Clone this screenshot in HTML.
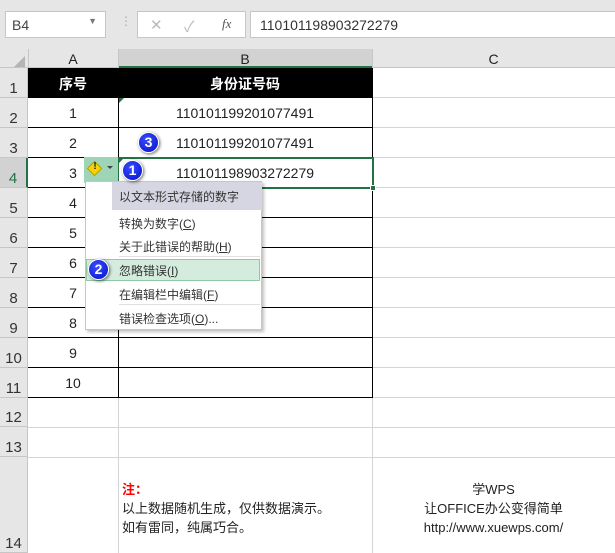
<!DOCTYPE html><html><head><meta charset="utf-8"><style>
*{margin:0;padding:0;box-sizing:border-box}
body{width:615px;height:553px;overflow:hidden;background:#fff;font-family:"Liberation Sans","Noto Sans CJK SC",sans-serif;position:relative;font-size:14px;color:#222}
.a{position:absolute}
.hl{position:absolute;background:#d4d4d4;height:1px}
.vl{position:absolute;background:#d4d4d4;width:1px}
.rh{position:absolute;left:0;width:28px;background:#e6e6e6;border-right:1px solid #c6c6c6;border-bottom:1px solid #c6c6c6;font-size:15px;display:flex;align-items:flex-end;justify-content:center;padding-bottom:0;color:#333}
.c{position:absolute;text-align:center;font-size:14px}
.badge{position:absolute;width:21px;height:21px;border-radius:50%;background:radial-gradient(circle at 40% 35%,#3a4cff,#0010c8);color:#fff;font-weight:bold;font-size:14px;text-align:center;line-height:18px;border:1.5px solid #fff;box-shadow:1px 1px 3px rgba(0,0,0,.6)}
.mi{position:absolute;left:119px;font-size:12px;color:#333}
</style></head><body>
<div class="a" style="left:0;top:0;width:615px;height:49px;background:#e6e6e6"></div>
<div class="a" style="left:5px;top:11px;width:101px;height:27px;background:#fff;border:1px solid #c6c6c6;font-size:14px;padding:5px 0 0 6px;color:#444">B4<span style="position:absolute;right:8px;top:4px;font-size:9px;color:#777">▼</span></div>
<div class="a" style="left:120px;top:14px;color:#aaa;font-size:12px">⋮</div>
<div class="a" style="left:137px;top:11px;width:109px;height:27px;background:#fff;border:1px solid #c6c6c6;color:#bbb;font-size:15px;padding-top:4px"><span style="position:absolute;left:12px">✕</span><span style="position:absolute;left:46px">✓</span><span style="position:absolute;left:84px;color:#555;font-style:italic;font-family:'Liberation Serif',serif;font-size:13px">fx</span></div>
<div class="a" style="left:250px;top:11px;width:370px;height:27px;background:#fff;border:1px solid #c6c6c6;padding:5px 0 0 9px;font-size:14px;color:#333">110101198903272279</div>
<div class="a" style="left:0;top:49px;width:615px;height:19px;background:#e6e6e6;border-bottom:1px solid #c6c6c6"></div>
<div class="a" style="left:14px;top:56px;width:0;height:0;border-left:11px solid transparent;border-bottom:11px solid #b4b4b4"></div>
<div class="a" style="left:118px;top:49px;width:254px;height:19px;background:#d2d2d2;border-bottom:2px solid #217346"></div>
<div class="vl" style="left:28px;top:49px;height:19px;background:#c6c6c6"></div>
<div class="vl" style="left:118px;top:49px;height:19px;background:#c6c6c6"></div>
<div class="vl" style="left:372px;top:49px;height:19px;background:#c6c6c6"></div>
<div class="c" style="left:28px;top:51px;width:90px;font-size:14px">A</div>
<div class="c" style="left:118px;top:51px;width:254px;font-size:14px">B</div>
<div class="c" style="left:372px;top:51px;width:243px;font-size:14px">C</div>
<div class="rh" style="top:68px;height:30px">1</div>
<div class="rh" style="top:98px;height:30px">2</div>
<div class="rh" style="top:128px;height:30px">3</div>
<div class="rh" style="top:158px;height:30px;background:#d2d2d2;color:#217346;border-right:2px solid #217346">4</div>
<div class="rh" style="top:188px;height:30px">5</div>
<div class="rh" style="top:218px;height:30px">6</div>
<div class="rh" style="top:248px;height:30px">7</div>
<div class="rh" style="top:278px;height:30px">8</div>
<div class="rh" style="top:308px;height:30px">9</div>
<div class="rh" style="top:338px;height:30px">10</div>
<div class="rh" style="top:368px;height:30px">11</div>
<div class="rh" style="top:398px;height:29px">12</div>
<div class="rh" style="top:427px;height:30px">13</div>
<div class="rh" style="top:457px;height:96px">14</div>
<div class="hl" style="left:372px;top:97px;width:243px"></div>
<div class="hl" style="left:372px;top:127px;width:243px"></div>
<div class="hl" style="left:372px;top:157px;width:243px"></div>
<div class="hl" style="left:372px;top:187px;width:243px"></div>
<div class="hl" style="left:372px;top:217px;width:243px"></div>
<div class="hl" style="left:372px;top:247px;width:243px"></div>
<div class="hl" style="left:372px;top:277px;width:243px"></div>
<div class="hl" style="left:372px;top:307px;width:243px"></div>
<div class="hl" style="left:372px;top:337px;width:243px"></div>
<div class="hl" style="left:372px;top:367px;width:243px"></div>
<div class="hl" style="left:28px;top:397px;width:587px"></div>
<div class="hl" style="left:28px;top:427px;width:587px"></div>
<div class="hl" style="left:28px;top:457px;width:587px"></div>
<div class="vl" style="left:118px;top:398px;height:155px"></div>
<div class="vl" style="left:372px;top:398px;height:155px"></div>
<div class="a" style="left:28px;top:68px;width:345px;height:30px;background:#000"></div>
<div class="c" style="left:28px;top:74px;width:90px;color:#fff;font-weight:bold;font-size:14px">序号</div>
<div class="c" style="left:118px;top:74px;width:254px;color:#fff;font-weight:bold;font-size:14px">身份证号码</div>
<div class="a" style="left:28px;top:98px;width:345px;height:300px;border:1px solid #000;border-top:0;border-left:0"></div>
<div class="a" style="left:118px;top:98px;width:1px;height:300px;background:#000"></div>
<div class="hl" style="left:28px;top:127px;width:345px;background:#000"></div>
<div class="hl" style="left:28px;top:157px;width:345px;background:#000"></div>
<div class="hl" style="left:28px;top:187px;width:345px;background:#000"></div>
<div class="hl" style="left:28px;top:217px;width:345px;background:#000"></div>
<div class="hl" style="left:28px;top:247px;width:345px;background:#000"></div>
<div class="hl" style="left:28px;top:277px;width:345px;background:#000"></div>
<div class="hl" style="left:28px;top:307px;width:345px;background:#000"></div>
<div class="hl" style="left:28px;top:337px;width:345px;background:#000"></div>
<div class="hl" style="left:28px;top:367px;width:345px;background:#000"></div>
<div class="c" style="left:28px;top:105px;width:90px">1</div>
<div class="c" style="left:28px;top:135px;width:90px">2</div>
<div class="c" style="left:28px;top:165px;width:90px">3</div>
<div class="c" style="left:28px;top:195px;width:90px">4</div>
<div class="c" style="left:28px;top:225px;width:90px">5</div>
<div class="c" style="left:28px;top:255px;width:90px">6</div>
<div class="c" style="left:28px;top:285px;width:90px">7</div>
<div class="c" style="left:28px;top:315px;width:90px">8</div>
<div class="c" style="left:28px;top:345px;width:90px">9</div>
<div class="c" style="left:28px;top:375px;width:90px">10</div>
<div class="c" style="left:118px;top:105px;width:254px">110101199201077491</div>
<div class="c" style="left:118px;top:135px;width:254px">110101199201077491</div>
<div class="c" style="left:118px;top:165px;width:254px">110101198903272279</div>
<div class="a" style="left:119px;top:98px;width:0;height:0;border-right:5px solid transparent;border-top:5px solid #217346"></div>
<div class="a" style="left:119px;top:158px;width:0;height:0;border-right:5px solid transparent;border-top:5px solid #217346"></div>
<div class="a" style="left:117px;top:157px;width:257px;height:32px;border:2px solid #217346"></div>
<div class="a" style="left:370px;top:185px;width:6px;height:6px;background:#217346;border:1px solid #fff"></div>
<div class="a" style="left:84px;top:157px;width:34px;height:26px;background:#9fd5b7"></div>
<div class="a" style="left:89px;top:163px;width:11px;height:11px;background:#f5d400;border:1px solid #b89a00;transform:rotate(45deg)"></div>
<div class="a" style="left:92px;top:161px;width:6px;font-size:10px;font-weight:bold;text-align:center">!</div>
<div class="a" style="left:107px;top:166px;width:0;height:0;border-left:3px solid transparent;border-right:3px solid transparent;border-top:3px solid #444"></div>
<div class="a" style="left:85px;top:181px;width:177px;height:149px;background:#fff;border:1px solid #c6c6c6;box-shadow:2px 2px 3px rgba(0,0,0,.25)"></div>
<div class="a" style="left:112px;top:182px;width:150px;height:28px;background:#d6d6e2"></div>
<div class="mi" style="top:188px">以文本形式存储的数字</div>
<div class="mi" style="top:215px">转换为数字(<u>C</u>)</div>
<div class="mi" style="top:238px">关于此错误的帮助(<u>H</u>)</div>
<div class="hl" style="left:119px;top:256px;width:141px;background:#e0e0e0"></div>
<div class="a" style="left:86px;top:259px;width:174px;height:22px;background:#d3ecdd;border:1px solid #8fcaa5"></div>
<div class="mi" style="top:262px">忽略错误(<u>I</u>)</div>
<div class="mi" style="top:286px">在编辑栏中编辑(<u>F</u>)</div>
<div class="hl" style="left:119px;top:304px;width:141px;background:#e0e0e0"></div>
<div class="mi" style="top:310px">错误检查选项(<u>O</u>)...</div>
<div class="badge" style="left:138px;top:132px">3</div>
<div class="badge" style="left:122px;top:160px">1</div>
<div class="badge" style="left:88px;top:259px">2</div>
<div class="a" style="left:122px;top:480px;font-size:13px;line-height:19px;color:#222"><span style="color:#f00;font-weight:bold">注：</span><br>以上数据随机生成，仅供数据演示。<br>如有雷同，纯属巧合。</div>
<div class="a" style="left:372px;top:480px;width:243px;text-align:center;font-size:13px;line-height:19px;color:#222">学WPS<br>让OFFICE办公变得简单<br>http://www.xuewps.com/</div>
</body></html>
